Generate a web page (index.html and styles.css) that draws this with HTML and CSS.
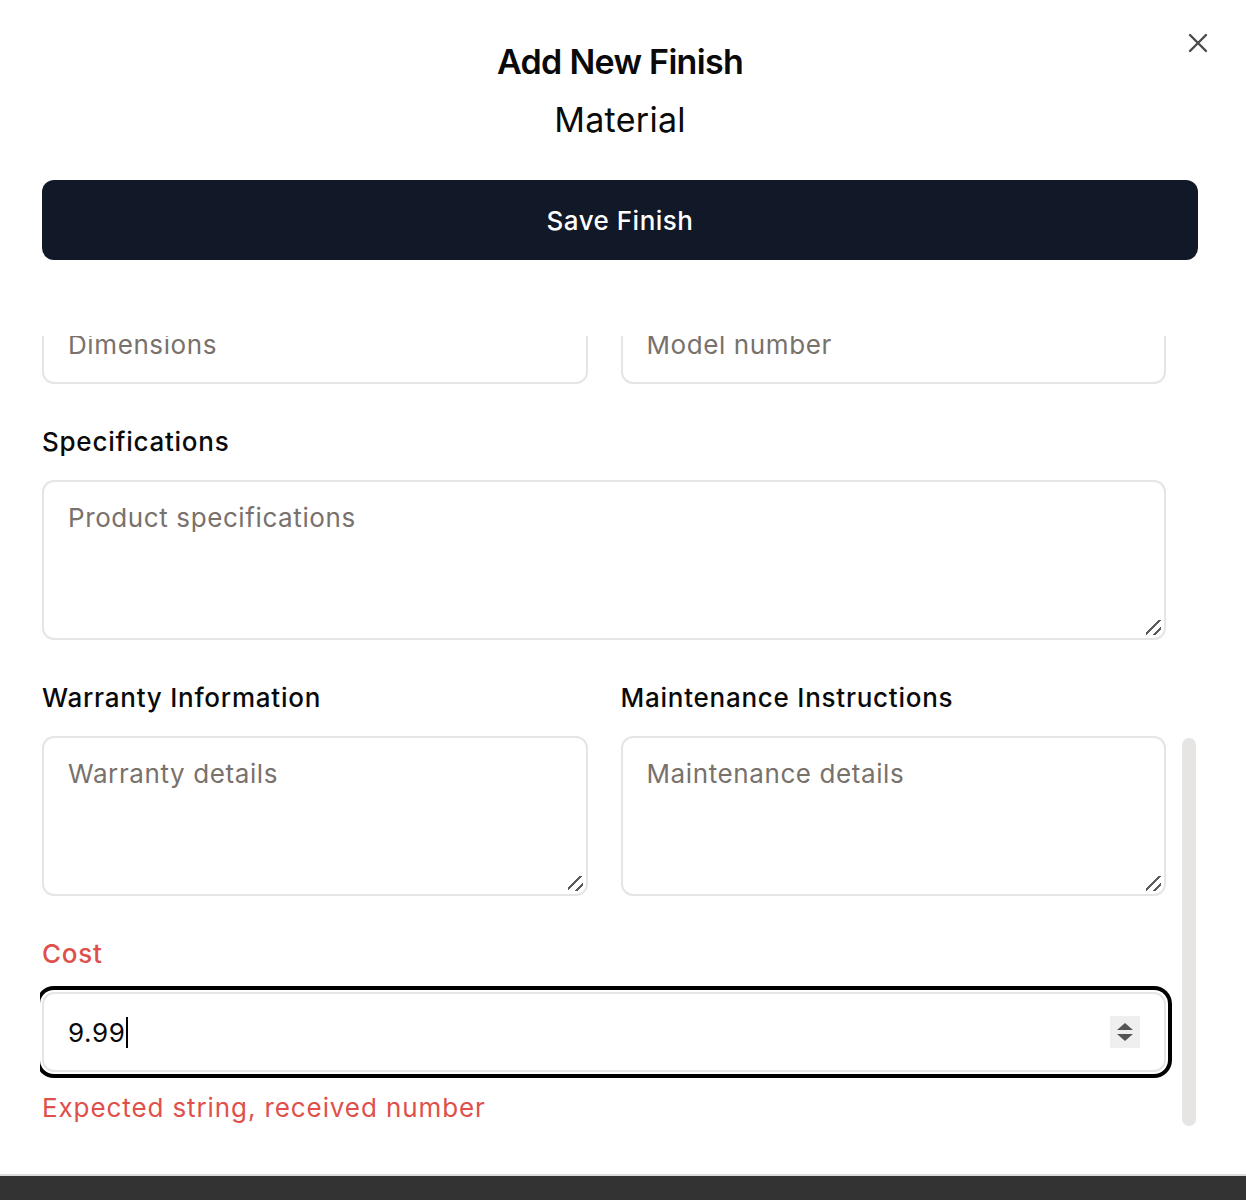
FILE: index.html
```html
<!DOCTYPE html>
<html lang="en">
<head>
<meta charset="utf-8">
<title>Add New Finish</title>
<link rel="stylesheet" href="styles.css">
</head>
<body>
<div class="modal">
  <button class="close" aria-label="Close">
    <svg viewBox="0 0 24 24" width="24" height="24" fill="none" stroke="currentColor" stroke-width="2.4" stroke-linecap="round"><path d="M4 4L20 20M20 4L4 20"/></svg>
  </button>
  <header class="head">
    <h2 class="title">Add New Finish</h2>
    <p class="subtitle">Material</p>
  </header>
  <button class="save">Save Finish</button>
  <div class="scroller" id="scroller">
    <form class="form">
      <div class="row">
        <div class="field"><label class="label">Finish Name</label><input class="input" placeholder="Finish name"></div>
        <div class="field"><label class="label">Brand</label><input class="input" placeholder="Brand"></div>
      </div>
      <div class="row">
        <div class="field"><label class="label">Supplier</label><input class="input" placeholder="Supplier"></div>
        <div class="field"><label class="label">Color</label><input class="input" placeholder="Color"></div>
      </div>
      <div class="row">
        <div class="field"><label class="label">Texture</label><input class="input" placeholder="Texture"></div>
        <div class="field"><label class="label">Finish Type</label><input class="input" placeholder="Finish type"></div>
      </div>
      <div class="row">
        <div class="field"><label class="label">Size</label><input class="input" placeholder="Dimensions"></div>
        <div class="field"><label class="label">Model Number</label><input class="input" placeholder="Model number"></div>
      </div>
      <div class="field">
        <label class="label">Specifications</label>
        <textarea class="input area" placeholder="Product specifications"></textarea>
      </div>
      <div class="row">
        <div class="field"><label class="label">Warranty Information</label><textarea class="input area" placeholder="Warranty details"></textarea></div>
        <div class="field"><label class="label">Maintenance Instructions</label><textarea class="input area" placeholder="Maintenance details"></textarea></div>
      </div>
      <div class="field">
        <label class="label error">Cost</label>
        <div class="cost-wrap">
          <input class="input cost" id="cost" type="number" value="9.99">
          <span class="caret" aria-hidden="true"></span>
          <span class="spin" aria-hidden="true"><i class="up"></i><i class="down"></i></span>
        </div>
        <p class="msg">Expected string, received number</p>
      </div>
    </form>
  </div>
  <div class="thumb" aria-hidden="true"></div>
</div>
<div class="bar"></div>
<script src="app.js"></script>
</body>
</html>
```
FILE: styles.css
```css
* { box-sizing: border-box; }
html, body { margin: 0; padding: 0; }
body {
  font-family: Inter, "Noto Sans", "Liberation Sans", sans-serif;
  color: #0a0a0a;
  background: #fff;
  height: 1200px;
  overflow: hidden;
  display: flex;
  flex-direction: column;
}
.modal {
  position: relative;
  height: 1176px;
  border-bottom: 2px solid #dcdcdc;
  padding: 33px 48px 0 42px;
  display: flex;
  flex-direction: column;
}
.close {
  position: absolute;
  top: 31px;
  left: 1186px;
  width: 24px;
  height: 24px;
  padding: 0;
  border: 0;
  background: none;
  color: #4a4a4a;
  cursor: pointer;
}
.close svg { display: block; }
.head { text-align: center; }
.title, .subtitle {
  margin: 0;
  font-size: 34px;
  line-height: 58px;
}
.title { font-weight: 600; letter-spacing: -0.7px; }
.subtitle { font-weight: 400; letter-spacing: 0.3px; }
.save {
  margin-top: 31px;
  height: 80px;
  width: 100%;
  border: 0;
  border-radius: 12px;
  background: #111827;
  color: #fff;
  font-family: inherit;
  font-size: 26px;
  font-weight: 500;
  letter-spacing: 0.5px;
}
.scroller {
  margin: 76px -48px 0 -2px;
  width: 1158px;
  height: 792px;
  overflow-y: auto;
  overflow-x: hidden;
  padding: 0 32px 0 2px;
  scrollbar-width: none;
}
.scroller::-webkit-scrollbar { display: none; }
.thumb {
  position: absolute;
  left: 1182px;
  top: 738px;
  width: 14px;
  height: 388px;
  border-radius: 7px;
  background: #e6e5e4;
}
.form {
  display: flex;
  flex-direction: column;
  gap: 40px;
  padding: 15px 0 2px;
}
.row {
  display: grid;
  grid-template-columns: 1fr 1fr;
  gap: 33px;
}
.field {
  display: flex;
  flex-direction: column;
  gap: 20px;
}
.label {
  font-size: 26px;
  line-height: 36px;
  font-weight: 500;
  color: #0a0a0a;
  letter-spacing: 0.75px;
}
.label.error { color: #e0504b; }
.input {
  display: block;
  width: 100%;
  height: 80px;
  border: 2px solid #e5e5e5;
  border-radius: 12px;
  padding: 0 24px;
  font-family: inherit;
  font-size: 26px;
  letter-spacing: 0.6px;
  color: #0a0a0a;
  background: #fff;
  outline: none;
}
.input::placeholder { color: #78716c; }
.area {
  height: 160px;
  padding: 18px 24px;
  line-height: 36px;
  resize: none;
  background-image: linear-gradient(135deg,
    transparent 40%, #5a5a5a 40%, #5a5a5a 50%, transparent 50%,
    transparent 72%, #5a5a5a 72%, #5a5a5a 82%, transparent 82%);
  background-repeat: no-repeat;
  background-size: 15px 15px;
  background-position: right 3px bottom 3px;
}
.cost-wrap { position: relative; }
.cost {
  box-shadow: 0 0 0 2px #fff, 0 0 0 6px #000;
  border-radius: 12px;
  -moz-appearance: textfield;
  caret-color: transparent;
}
.cost::-webkit-outer-spin-button,
.cost::-webkit-inner-spin-button { -webkit-appearance: none; margin: 0; }
.caret {
  position: absolute;
  left: 84px;
  top: 25px;
  width: 2px;
  height: 31px;
  background: #000;
}
.spin {
  position: absolute;
  top: 24px;
  left: 1068px;
  width: 30px;
  height: 32px;
  background: #efefef;
  display: flex;
  flex-direction: column;
  align-items: center;
  justify-content: center;
  gap: 4px;
}
.spin i {
  display: block;
  width: 0;
  height: 0;
  border-left: 8px solid transparent;
  border-right: 8px solid transparent;
}
.spin .up { border-bottom: 7px solid #555; }
.spin .down { border-top: 7px solid #555; }
.msg {
  margin: -2px 0 0;
  font-size: 26px;
  line-height: 36px;
  letter-spacing: 0.9px;
  color: #e0504b;
}
.bar {
  flex: 1;
  background: #333333;
}
```
FILE: app.js
```js
var s = document.getElementById('scroller');
var c = document.getElementById('cost');
c.focus({ preventScroll: true });
s.scrollTop = s.scrollHeight;
```
